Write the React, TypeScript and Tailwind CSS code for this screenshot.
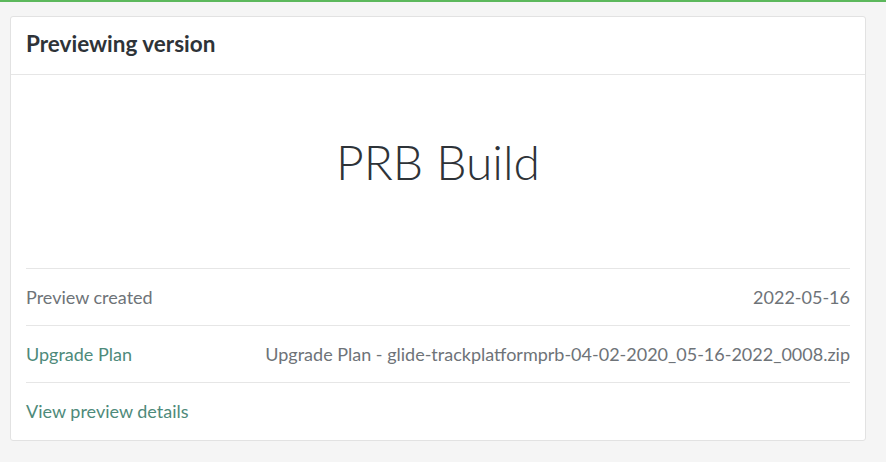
export default function App() {
  return (
    <div
      className="w-[886px] h-[462px] bg-[#f5f5f5] border-t-2 border-[#5cb85c] pt-[14px] px-[10px] overflow-hidden"
      style={{ fontFamily: '"Lato", "Liberation Sans", sans-serif' }}
    >
      <div className="w-[856px] h-[425px] bg-white border border-[#e2e2e2] rounded-[3px] flex flex-col">
        <div className="h-[58px] border-b border-[#e6e6e6] flex items-center px-[15px]">
          <h2 className="text-[22.5px] font-bold text-[#2e3338] leading-none pb-[2px]">Previewing version</h2>
        </div>
        <div className="flex-1 px-[15px] flex flex-col">
          <div className="h-[194px] flex items-center justify-center border-b border-[#e6e6e6]">
            <span className="text-[48px] font-light text-[#2e3338] pb-[20px]">PRB Build</span>
          </div>
          <div className="h-[57px] flex items-center justify-between border-b border-[#e6e6e6] text-[18px] text-[#6e7378]">
            <span>Preview created</span>
            <span>2022-05-16</span>
          </div>
          <div className="h-[57px] flex items-center justify-between border-b border-[#e6e6e6] text-[18px]">
            <span className="text-[#4e8a7a]">Upgrade Plan</span>
            <span className="text-[#6e7378]">Upgrade Plan - glide-trackplatformprb-04-02-2020_05-16-2022_0008.zip</span>
          </div>
          <div className="h-[57px] flex items-center text-[18px]">
            <span className="text-[#4e8a7a]">View preview details</span>
          </div>
        </div>
      </div>
    </div>
  );
}
